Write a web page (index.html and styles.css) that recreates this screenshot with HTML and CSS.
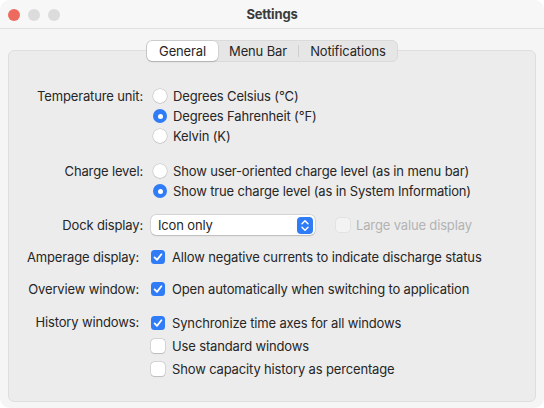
FILE: index.html
```html
<!DOCTYPE html>
<html lang="en">
<head>
<meta charset="utf-8">
<title>Settings</title>
<link rel="stylesheet" href="styles.css">
</head>
<body>
<div class="window">
  <header class="titlebar">
    <div class="lights"><span class="light red"></span><span class="light"></span><span class="light"></span></div>
    <div class="title">Settings</div>
    <div></div>
  </header>
  <main class="content">
    <nav class="tabs">
      <span class="tab tab-general active">General</span>
      <span class="tab tab-menu">Menu Bar</span>
      <span class="sep"></span>
      <span class="tab tab-notif">Notifications</span>
    </nav>
    <section class="box">
      <div class="row sec-temp">
        <div class="label">Temperature unit:</div>
        <div class="controls radios">
          <div class="opt"><span class="radio"></span>Degrees Celsius (°C)</div>
          <div class="opt"><span class="radio on"></span>Degrees Fahrenheit (°F)</div>
          <div class="opt"><span class="radio"></span>Kelvin (K)</div>
        </div>
      </div>
      <div class="row sec-charge">
        <div class="label">Charge level:</div>
        <div class="controls radios">
          <div class="opt"><span class="radio"></span>Show user-oriented charge level (as in menu bar)</div>
          <div class="opt"><span class="radio on"></span>Show true charge level (as in System Information)</div>
        </div>
      </div>
      <div class="row sec-dock">
        <div class="label">Dock display:</div>
        <div class="controls dock">
          <div class="popup">
            <span class="popup-text">Icon only</span>
            <span class="stepper"><svg width="16" height="17" viewBox="0 0 16 17"><path d="M5 6.8 L8 3.8 L11 6.8 M5 10.2 L8 13.2 L11 10.2" fill="none" stroke="#fff" stroke-width="1.5" stroke-linecap="round" stroke-linejoin="round"/></svg></span>
          </div>
          <div class="opt disabled"><span class="check off dis"></span>Large value display</div>
        </div>
      </div>
      <div class="row sec-amp">
        <div class="label cb">Amperage display:</div>
        <div class="controls checks">
          <div class="opt"><span class="check"><svg width="14" height="14" viewBox="0 0 14 14"><path d="M3.6 7.4 L6 9.9 L10.4 4.2" fill="none" stroke="#fff" stroke-width="1.8" stroke-linecap="round" stroke-linejoin="round"/></svg></span>Allow negative currents to indicate discharge status</div>
        </div>
      </div>
      <div class="row sec-over">
        <div class="label cb">Overview window:</div>
        <div class="controls checks">
          <div class="opt"><span class="check"><svg width="14" height="14" viewBox="0 0 14 14"><path d="M3.6 7.4 L6 9.9 L10.4 4.2" fill="none" stroke="#fff" stroke-width="1.8" stroke-linecap="round" stroke-linejoin="round"/></svg></span>Open automatically when switching to application</div>
        </div>
      </div>
      <div class="row sec-hist">
        <div class="label cb tall">History windows:</div>
        <div class="controls checks">
          <div class="opt tall"><span class="check"><svg width="14" height="14" viewBox="0 0 14 14"><path d="M3.6 7.4 L6 9.9 L10.4 4.2" fill="none" stroke="#fff" stroke-width="1.8" stroke-linecap="round" stroke-linejoin="round"/></svg></span>Synchronize time axes for all windows</div>
          <div class="opt tall"><span class="check off"></span>Use standard windows</div>
          <div class="opt tall"><span class="check off"></span>Show capacity history as percentage</div>
        </div>
      </div>
    </section>
  </main>
</div>
</body>
</html>
```

FILE: styles.css
```css
* { box-sizing: border-box; }
html, body { margin: 0; padding: 0; background: #ffffff; }
body {
  font-family: Inter, "Liberation Sans", sans-serif;
  font-size: 13px;
  color: #262626;
  letter-spacing: -0.15px;
}
.window {
  width: 544px;
  height: 408px;
  background: #f5f5f5;
  border-radius: 10px;
  overflow: hidden;
  display: flex;
  flex-direction: column;
}
.titlebar {
  height: 29px;
  border-bottom: 1px solid #e1e1e1;
  background: #f7f7f7;
  display: grid;
  grid-template-columns: 1fr auto 1fr;
  align-items: center;
}
.lights { display: flex; gap: 8px; padding-left: 8px; padding-top: 1px; }
.light { width: 12px; height: 12px; border-radius: 50%; background: #dcdcdc; }
.light.red { background: #ec6a5e; }
.title { font-weight: 700; color: #3b3b3b; font-size: 13px; }
.content {
  flex: 1;
  padding: 11px 8px 6px;
  display: flex;
  flex-direction: column;
}
.tabs {
  align-self: center;
  position: relative;
  z-index: 1;
  display: flex;
  align-items: center;
  height: 22px;
  width: 252px;
  background: #e6e6e6;
  border: 1px solid #dadada;
  border-radius: 6px;
  margin-bottom: -12px;
}
.tab { height: 20px; display: flex; align-items: center; justify-content: center; color: #262626; }
.tab-general { width: 71px; }
.tab-menu { width: 80px; }
.tab-notif { flex: 1; }
.tab.active {
  background: #ffffff;
  border-radius: 5px;
  box-shadow: 0 0 0 0.5px rgba(0,0,0,0.12), 0 1px 1.5px rgba(0,0,0,0.15);
}
.sep { width: 1px; height: 12px; background: #cfcfcf; }
.box {
  flex: 1;
  background: #ececec;
  border: 1px solid #dedede;
  border-radius: 6px;
  padding-top: 35px;
}
.row { display: flex; align-items: flex-start; }
.label {
  width: 134px;
  flex: none;
  text-align: right;
  line-height: 20px;
  height: 20px;
  white-space: nowrap;
}
.label.cb { padding-right: 4px; }
.label.tall { line-height: 23px; height: 23px; }
.controls { display: flex; flex-direction: column; }
.radios { margin-left: 10px; }
.checks { margin-left: 8px; }
.opt { display: flex; align-items: center; height: 20px; white-space: nowrap; }
.opt.tall { height: 23px; }
.sec-charge { margin-top: 15px; }
.sec-dock { margin-top: 14px; }
.sec-amp { margin-top: 12px; }
.sec-over { margin-top: 12px; }
.sec-hist { margin-top: 12px; }
.radio {
  width: 14px; height: 14px; border-radius: 50%;
  background: #fff;
  box-shadow: 0 0 0 0.5px rgba(0,0,0,0.18), 0 0.5px 1px rgba(0,0,0,0.12);
  margin-right: 6px;
  flex: none;
  position: relative;
}
.radio.on { background: #2f7cf6; box-shadow: none; }
.radio.on::after {
  content: "";
  position: absolute;
  left: 4.5px; top: 4.5px;
  width: 5px; height: 5px; border-radius: 50%;
  background: #fff;
}
.check {
  width: 14px; height: 14px; border-radius: 3.5px;
  background: #2f7cf6;
  margin-right: 7px;
  flex: none;
  display: flex;
}
.check.off {
  background: #fff;
  box-shadow: 0 0 0 0.5px rgba(0,0,0,0.18), 0 0.5px 1px rgba(0,0,0,0.12);
}
.check.dis { background: #f3f3f3; box-shadow: 0 0 0 0.5px rgba(0,0,0,0.08); margin-right: 6px; }
.dock { flex-direction: row; align-items: center; margin-left: 8px; }
.popup {
  width: 164px; height: 20px;
  background: #fff;
  border-radius: 5px;
  box-shadow: 0 0 0 0.5px rgba(0,0,0,0.14), 0 0.5px 1.5px rgba(0,0,0,0.15);
  display: flex; align-items: center; justify-content: space-between;
  padding: 0 2px 0 7px;
}
.stepper {
  width: 16px; height: 17px;
  background: #2f7cf6;
  border-radius: 4px;
  display: flex;
}
.opt.disabled { color: #b3b3b3; margin-left: 21px; }
```
